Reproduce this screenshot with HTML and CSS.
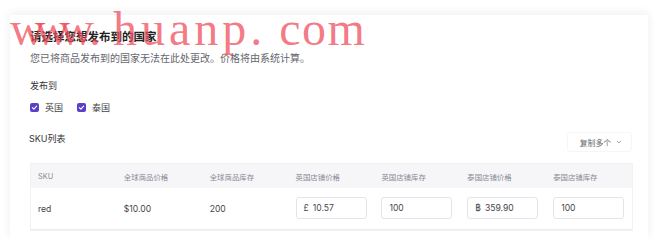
FILE: index.html
```html
<!DOCTYPE html>
<html lang="zh">
<head>
<meta charset="utf-8">
<link rel="stylesheet" href="styles.css">
</head>
<body>
<div class="card">
  <h1 class="title">请选择您想发布到的国家</h1>
  <p class="subtitle">您已将商品发布到的国家无法在此处更改。价格将由系统计算。</p>
  <div class="label">发布到</div>
  <div class="checks">
    <label class="check"><span class="box"><svg viewBox="0 0 10 10" width="9" height="9"><path d="M2.6 5.2 L4.3 6.8 L7.4 3.4" fill="none" stroke="#fff" stroke-width="1.2" stroke-linecap="round" stroke-linejoin="round"/></svg></span>英国</label>
    <label class="check"><span class="box"><svg viewBox="0 0 10 10" width="9" height="9"><path d="M2.6 5.2 L4.3 6.8 L7.4 3.4" fill="none" stroke="#fff" stroke-width="1.2" stroke-linecap="round" stroke-linejoin="round"/></svg></span>泰国</label>
  </div>
  <div class="sku-head">
    <div class="label sku-label">SKU列表</div>
    <div class="copy-btn">复制多个<svg viewBox="0 0 8 8" width="6" height="6"><path d="M1.8 3 L4 5.2 L6.2 3" fill="none" stroke="#888" stroke-width="1" stroke-linecap="round" stroke-linejoin="round"/></svg></div>
  </div>
  <div class="table">
    <div class="row head">
      <div class="cell">SKU</div>
      <div class="cell">全球商品价格</div>
      <div class="cell">全球商品库存</div>
      <div class="cell">英国店铺价格</div>
      <div class="cell">英国店铺库存</div>
      <div class="cell">泰国店铺价格</div>
      <div class="cell">泰国店铺库存</div>
    </div>
    <div class="row data">
      <div class="cell">red</div>
      <div class="cell">$10.00</div>
      <div class="cell">200</div>
      <div class="cell"><div class="input"><span class="cur">£</span>10.57</div></div>
      <div class="cell"><div class="input">100</div></div>
      <div class="cell"><div class="input"><span class="cur">฿</span>359.90</div></div>
      <div class="cell"><div class="input">100</div></div>
    </div>
  </div>
</div>
<div class="watermark"><span class="ww">www</span><span class="dot1">.</span> <span class="hu">huanp</span>.<span class="co">com</span></div>
</body>
</html>
```
FILE: styles.css
```css
html, body {
  margin: 0;
  padding: 0;
  background: #ffffff;
}
body {
  width: 670px;
  height: 239px;
  overflow: hidden;
  position: relative;
  font-family: "Inter", "Noto Sans CJK SC", sans-serif;
  color: #333;
}
.card {
  margin: 15px 0 0 10px;
  width: 638px;
  height: 224px;
  box-sizing: border-box;
  padding: 14px 15px 0 20px;
  background: #fff;
  box-shadow: 0 -2px 9px rgba(30, 30, 60, 0.07);
}
.title {
  margin: 0;
  font-size: 11.5px;
  line-height: 16px;
  font-weight: 600;
  color: #1f1f24;
}
.subtitle {
  margin: 6px 0 0;
  font-size: 10px;
  line-height: 14px;
  color: #66666e;
}
.label {
  margin-top: 14px;
  font-size: 9px;
  line-height: 13px;
  color: #333338;
}
.checks {
  display: flex;
  gap: 14px;
  margin-top: 9px;
  height: 13px;
  align-items: center;
}
.check {
  display: flex;
  align-items: center;
  gap: 6px;
  font-size: 9px;
  color: #444;
}
.box {
  width: 9px;
  height: 9px;
  border-radius: 2px;
  background: #5b3fc6;
  display: flex;
  align-items: center;
  justify-content: center;
}
.box svg { display: block; }
.sku-head {
  display: flex;
  justify-content: space-between;
  align-items: flex-start;
  margin-top: 18px;
}
.sku-label {
  margin-top: 0;
  margin-left: -1px;
}
.copy-btn {
  height: 20px;
  box-sizing: border-box;
  padding: 0 9px 0 12px;
  display: flex;
  align-items: center;
  gap: 5px;
  font-size: 7.8px;
  color: #66666c;
  border: 1px solid #f6f6f8;
  border-radius: 3px;
  margin-right: 1px;
}
.copy-btn svg { display: block; }
.table {
  margin-top: 11px;
  width: 603px;
  border: 1px solid #f2f2f5;
  box-sizing: border-box;
}
.row {
  display: grid;
  grid-template-columns: repeat(7, 1fr);
  align-items: center;
}
.row.head {
  height: 24px;
  background: #f6f6f9;
  font-size: 7.4px;
  color: #8a8a92;
}
.row.data {
  height: 41px;
  font-size: 8.6px;
  color: #45454b;
  border-bottom: 1px solid #ececf0;
}
.cell {
  padding-left: 7px;
  white-space: nowrap;
}
.input {
  width: 71px;
  height: 22px;
  box-sizing: border-box;
  border: 1px solid #e4e4ea;
  border-radius: 3px;
  padding-left: 7px;
  display: flex;
  align-items: center;
  margin-top: -2px;
}
.cur {
  margin-right: 4px;
}
.watermark {
  position: absolute;
  left: 10px;
  top: 5px;
  font-family: "Liberation Serif", serif;
  font-size: 48px;
  line-height: 48px;
  color: rgba(238, 72, 88, 0.72);
  white-space: nowrap;
  pointer-events: none;
}
.ww { letter-spacing: -10px; }
.dot1 { margin-left: 5px; }
.hu { letter-spacing: 4px; }
.co { letter-spacing: 1.5px; margin-left: 17px; }
```
